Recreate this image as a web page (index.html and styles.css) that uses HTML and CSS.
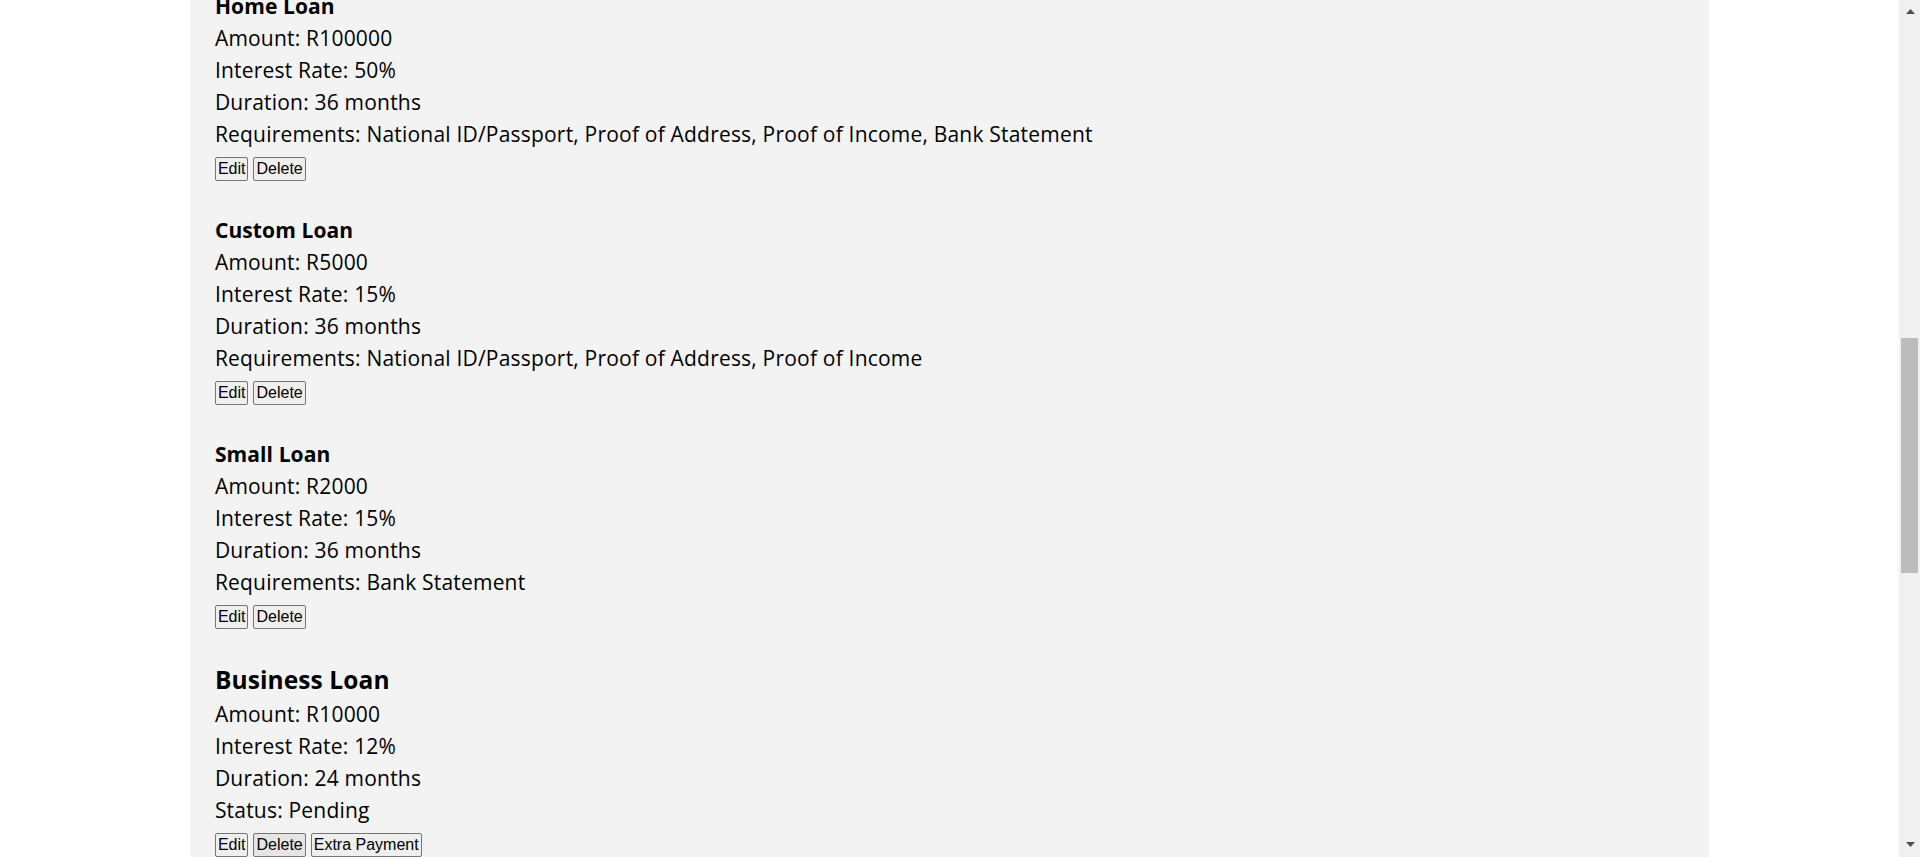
FILE: index.html
```html
<!DOCTYPE html>
<html lang="en">
<head>
<meta charset="utf-8">
<title>Loans</title>
<link rel="stylesheet" href="styles.css">
</head>
<body>
<div class="viewport">
  <main class="page">
    <section class="panel">
      <div class="loan">
        <h4 class="loan-title">Home Loan</h4>
        <p class="line">Amount: R100000</p>
        <p class="line">Interest Rate: 50%</p>
        <p class="line">Duration: 36 months</p>
        <p class="line">Requirements: National ID/Passport, Proof of Address, Proof of Income, Bank Statement</p>
        <div class="actions"><button class="btn">Edit</button> <button class="btn">Delete</button></div>
      </div>
      <div class="loan">
        <h4 class="loan-title">Custom Loan</h4>
        <p class="line">Amount: R5000</p>
        <p class="line">Interest Rate: 15%</p>
        <p class="line">Duration: 36 months</p>
        <p class="line">Requirements: National ID/Passport, Proof of Address, Proof of Income</p>
        <div class="actions"><button class="btn">Edit</button> <button class="btn">Delete</button></div>
      </div>
      <div class="loan">
        <h4 class="loan-title">Small Loan</h4>
        <p class="line">Amount: R2000</p>
        <p class="line">Interest Rate: 15%</p>
        <p class="line">Duration: 36 months</p>
        <p class="line">Requirements: Bank Statement</p>
        <div class="actions"><button class="btn">Edit</button> <button class="btn">Delete</button></div>
      </div>
      <div class="loan">
        <h3 class="loan-title loan-title-lg">Business Loan</h3>
        <p class="line">Amount: R10000</p>
        <p class="line">Interest Rate: 12%</p>
        <p class="line">Duration: 24 months</p>
        <p class="line">Status: Pending</p>
        <div class="actions"><button class="btn">Edit</button> <button class="btn btn-hover">Delete</button> <button class="btn">Extra Payment</button></div>
      </div>
    </section>
  </main>
  <div class="scrollbar" aria-hidden="true">
    <svg class="arrow" width="9" height="5" viewBox="0 0 9 5"><path d="M0 5 L4.5 0 L9 5 Z" fill="#505050"/></svg>
    <div class="track"><div class="thumb"></div></div>
    <svg class="arrow" width="9" height="5" viewBox="0 0 9 5"><path d="M0 0 L9 0 L4.5 5 Z" fill="#505050"/></svg>
  </div>
</div>
</body>
</html>
```
FILE: styles.css
```css
html, body {
  margin: 0;
  padding: 0;
  height: 100%;
  overflow: hidden;
  background: #ffffff;
}

.viewport {
  display: flex;
  height: 857px;
  overflow: hidden;
}

.page {
  flex: 1;
  overflow: hidden;
  font-family: "Open Sans", "Liberation Sans", sans-serif;
  color: #000;
}

.panel {
  width: 80%;
  margin: -10px auto 0;
  background: #f3f3f3;
  padding: 0 25px;
  box-sizing: border-box;
  min-height: 900px;
}

.loan {
  padding-bottom: 33px;
}

.loan-title {
  margin: 0;
  font-size: 21px;
  line-height: 32px;
  font-weight: 700;
  letter-spacing: 0.1px;
}

.loan-title-lg {
  font-size: 24.5px;
  line-height: 36px;
}

.line {
  margin: 0;
  font-size: 21px;
  line-height: 32px;
  letter-spacing: 0.2px;
}

.actions {
  margin-top: 7px;
  display: flex;
  gap: 5px;
  height: 24px;
}

.btn {
  font-family: "Liberation Sans", Arial, sans-serif;
  font-size: 16px;
  line-height: 18px;
  padding: 2px 2px;
  border: 1px solid #767676;
  border-radius: 2px;
  background: #efefef;
  color: #000;
  height: 24px;
  box-sizing: border-box;
}

.btn-hover {
  background: #e5e5e5;
}

.scrollbar {
  width: 21px;
  background: #f0f0f0;
  display: flex;
  flex-direction: column;
  align-items: center;
  padding: 9px 0 10px;
  box-sizing: border-box;
}

.arrow {
  display: block;
  margin-left: 2px;
}

.track {
  flex: 1;
  width: 100%;
  position: relative;
}

.thumb {
  position: absolute;
  left: 2px;
  width: 17px;
  top: 324px;
  height: 235px;
  background: #bcbcbc;
}
```
